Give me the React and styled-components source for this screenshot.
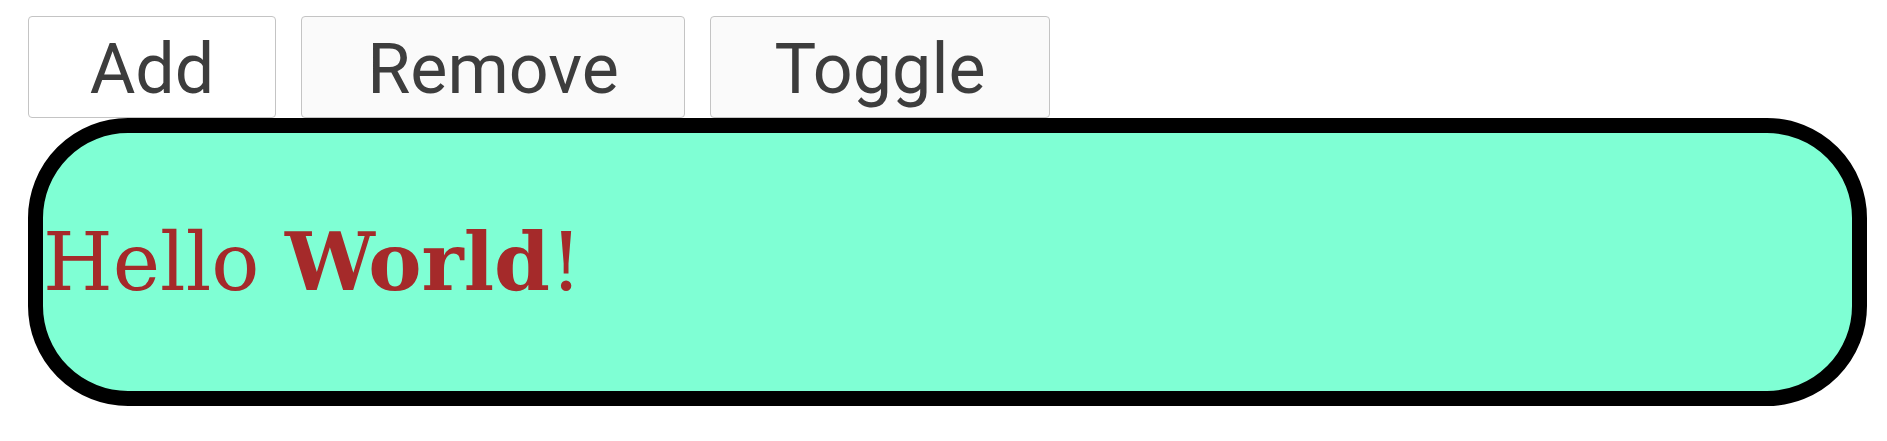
import React from "react";
import styled, { createGlobalStyle } from "styled-components";

const GlobalStyle = createGlobalStyle`
  body {
    margin: 8px;
    background: #ffffff;
  }
`;

const Page = styled.div`
  padding: 8px 12px 0 20px;
`;

const Toolbar = styled.div`
  display: flex;
  gap: 25px;
`;

const Button = styled.button`
  width: ${(p) => p.$width}px;
  height: 102px;
  padding: 4px 0 0;
  display: flex;
  align-items: center;
  justify-content: center;
  background: ${(p) => (p.$plain ? "#ffffff" : "#fafafa")};
  border: 1px solid #c4c4c4;
  border-radius: 4px;
  color: #3d3d3d;
  font-family: Roboto, "Open Sans", sans-serif;
  font-size: 70px;
  line-height: 1;
  cursor: pointer;
`;

const Bubble = styled.div`
  height: 258px;
  display: flex;
  align-items: center;
  background: #7fffd4;
  border: 15px solid #000000;
  border-radius: 100px;
`;

const Greeting = styled.p`
  margin: 0;
  color: #a52a2a;
  font-family: "DejaVu Serif", serif;
  font-size: 80px;
  white-space: nowrap;
`;

export default function App() {
  return (
    <Page>
      <GlobalStyle />
      <Toolbar>
        <Button $width={248} $plain>Add</Button>
        <Button $width={384}>Remove</Button>
        <Button $width={340}>Toggle</Button>
      </Toolbar>
      <Bubble>
        <Greeting>
          Hello <b>World</b>!
        </Greeting>
      </Bubble>
    </Page>
  );
}
